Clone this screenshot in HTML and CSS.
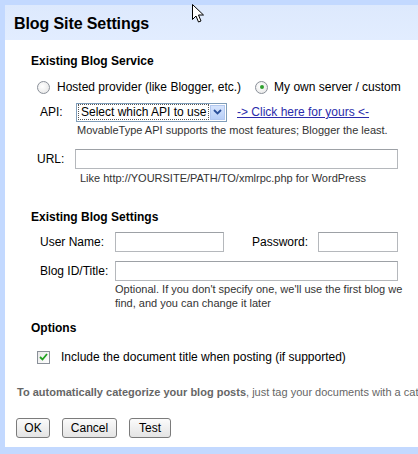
FILE: index.html
```html
<!DOCTYPE html>
<html>
<head>
<meta charset="utf-8">
<link rel="stylesheet" href="styles.css">
</head>
<body>
<div class="frame">
  <div class="dialog">
    <div class="header"><h1 class="title">Blog Site Settings</h1></div>
    <div class="body">
      <div class="section">
        <h2 class="heading">Existing Blog Service</h2>
        <div class="row radios">
          <span class="radio"></span><span class="radio-label">Hosted provider (like Blogger, etc.)</span>
          <span class="radio checked"></span><span class="radio-label">My own server / custom</span>
        </div>
        <div class="row api-row">
          <span class="label api-label">API:</span>
          <div class="select"><span class="select-text">Select which API to use</span><span class="select-btn"><svg width="9" height="6" viewBox="0 0 9 6"><path d="M1 1 L4.5 4.5 L8 1" fill="none" stroke="#2a4f9a" stroke-width="1.8"/></svg></span></div>
          <a class="link" href="#">-&gt; Click here for yours &lt;-</a>
        </div>
        <div class="hint api-hint">MovableType API supports the most features; Blogger the least.</div>
        <div class="row url-row">
          <span class="label url-label">URL:</span>
          <span class="input url-input"></span>
        </div>
        <div class="hint url-hint">Like http://YOURSITE/PATH/TO/xmlrpc.php for WordPress</div>
      </div>

      <div class="section settings">
        <h2 class="heading">Existing Blog Settings</h2>
        <div class="row user-row">
          <span class="label user-label">User Name:</span>
          <span class="input user-input"></span>
          <span class="label pass-label">Password:</span>
          <span class="input pass-input"></span>
        </div>
        <div class="row blog-row">
          <span class="label user-label">Blog ID/Title:</span>
          <span class="input blog-input"></span>
        </div>
        <div class="hint blog-hint">Optional. If you don't specify one, we'll use the first blog we<br>find, and you can change it later</div>
      </div>

      <div class="section options">
        <h2 class="heading">Options</h2>
        <div class="row check-row">
          <span class="checkbox"><svg width="9" height="8" viewBox="0 0 9 8"><path d="M1 4 L3.5 6.5 L8 1" fill="none" stroke="#21a121" stroke-width="1.8"/></svg></span>
          <span class="check-label">Include the document title when posting (if supported)</span>
        </div>
      </div>

      <div class="note"><b>To automatically categorize your blog posts</b>, just tag your documents with a category name</div>

      <div class="buttons">
        <button class="btn ok">OK</button>
        <button class="btn cancel">Cancel</button>
        <button class="btn test">Test</button>
      </div>
    </div>
  </div>
  <svg class="cursor" width="13" height="20" viewBox="0 0 13 20"><path d="M0.5 0.5 L0.5 15.5 L4 12 L6.5 18 L9 17 L6.5 11 L11.5 11 Z" fill="#fff" stroke="#000" stroke-width="1"/></svg>
</div>
</body>
</html>
```

FILE: styles.css
```css
html, body {
  margin: 0;
  padding: 0;
  background: #c3d9ff;
  overflow: hidden;
}
body {
  font-family: "Liberation Sans", Arial, sans-serif;
  color: #000;
}
.frame {
  position: relative;
  width: 413px;
  height: 442px;
  padding: 5px 0 7px 5px;
  background: #c3d9ff;
  overflow: hidden;
}
.dialog {
  width: 500px;
  height: 442px;
  background: #fff;
}
.header {
  height: 35px;
  background: linear-gradient(#dde9fd, #e2edff);
  display: flex;
  align-items: center;
  padding-left: 9px;
}
.title {
  margin: 0;
  font-size: 16px;
  font-weight: bold;
  letter-spacing: -0.1px;
  padding-top: 2px;
}
.body {
  padding-left: 11px;
}
.section {
  padding-left: 15px;
}
.heading {
  margin: 0;
  font-size: 12px;
  font-weight: bold;
  line-height: 14px;
}
.section:first-child .heading { margin-top: 14px; }
.row {
  display: flex;
  align-items: center;
  font-size: 12px;
}
.radios {
  margin-top: 7px;
  height: 24px;
  padding-left: 6px;
}
.radio {
  width: 11px;
  height: 11px;
  border: 1px solid #8a9099;
  border-radius: 50%;
  background: radial-gradient(circle at 40% 40%, #fff, #e3e3e3);
  display: inline-flex;
  align-items: center;
  justify-content: center;
  flex: none;
}
.radio.checked::after {
  content: "";
  width: 4px;
  height: 4px;
  border-radius: 50%;
  background: #2fa02f;
}
.radio-label { margin-left: 7px; margin-right: 14px; }
.radio.checked + .radio-label { margin-left: 6px; }
.api-row {
  height: 22px;
  margin-top: 2px;
  padding-left: 9px;
}
.api-label { width: 36px; }
.select {
  width: 151px;
  height: 19px;
  border: 1px solid #7f9db9;
  display: flex;
  align-items: center;
  background: #fff;
  box-sizing: border-box;
  padding: 1px;
}
.select-text {
  flex: 1;
  height: 14px;
  line-height: 14px;
  border: 1px dotted #555;
  padding-left: 2px;
  font-size: 12px;
}
.select-btn {
  width: 15px;
  height: 15px;
  margin-left: 1px;
  background: linear-gradient(#d6e4fd, #b8cff8);
  border: 1px solid #b3c8ef;
  display: flex;
  align-items: center;
  justify-content: center;
  box-sizing: border-box;
}
.link {
  margin-left: 10px;
  color: #2b2bab;
  text-decoration: underline;
}
.hint {
  font-size: 11px;
  color: #333;
}
.api-hint {
  margin-left: 46px;
  line-height: 14px;
  margin-top: 0;
}
.url-row {
  margin-top: 12px;
  height: 20px;
  padding-left: 6px;
}
.url-label { width: 38px; }
.input {
  height: 20px;
  box-sizing: border-box;
  border: 1px solid #b5b8bc;
  border-top-color: #9da1a6;
  background: #fff;
  flex: none;
}
.url-input { width: 323px; }
.url-hint {
  margin-left: 49px;
  margin-top: 2px;
  line-height: 14px;
}
.settings { margin-top: 25px; }
.user-row {
  margin-top: 8px;
  height: 20px;
  padding-left: 9px;
}
.user-label { width: 75px; }
.user-input { width: 109px; }
.pass-label { margin-left: 28px; width: 66px; }
.pass-input { width: 80px; }
.blog-row {
  margin-top: 9px;
  height: 20px;
  padding-left: 9px;
}
.blog-input { width: 283px; }
.blog-hint {
  margin-left: 84px;
  margin-top: 1px;
  line-height: 14px;
}
.options { margin-top: 11px; }
.check-row {
  margin-top: 14px;
  height: 16px;
  padding-left: 6px;
}
.checkbox {
  width: 11px;
  height: 11px;
  border: 1px solid #8a9099;
  background: linear-gradient(135deg, #e8e8e8, #fff);
  display: inline-flex;
  align-items: center;
  justify-content: center;
  flex: none;
}
.check-label { margin-left: 11px; }
.note {
  margin-top: 20px;
  font-size: 11px;
  line-height: 14px;
  color: #666;
  white-space: nowrap;
  padding-left: 1px;
}
.buttons {
  margin-top: 19px;
  display: flex;
  gap: 12px;
}
.btn {
  font-family: "Liberation Sans", Arial, sans-serif;
  font-size: 12px;
  height: 20px;
  padding: 0;
  border: 1px solid #7b7b7b;
  border-radius: 3px;
  background: linear-gradient(#fbfbfb, #e4e4e4);
  color: #000;
}
.ok { width: 34px; }
.cancel { width: 55px; }
.test { width: 42px; }
.cursor {
  position: absolute;
  left: 192px;
  top: 4px;
}
```
